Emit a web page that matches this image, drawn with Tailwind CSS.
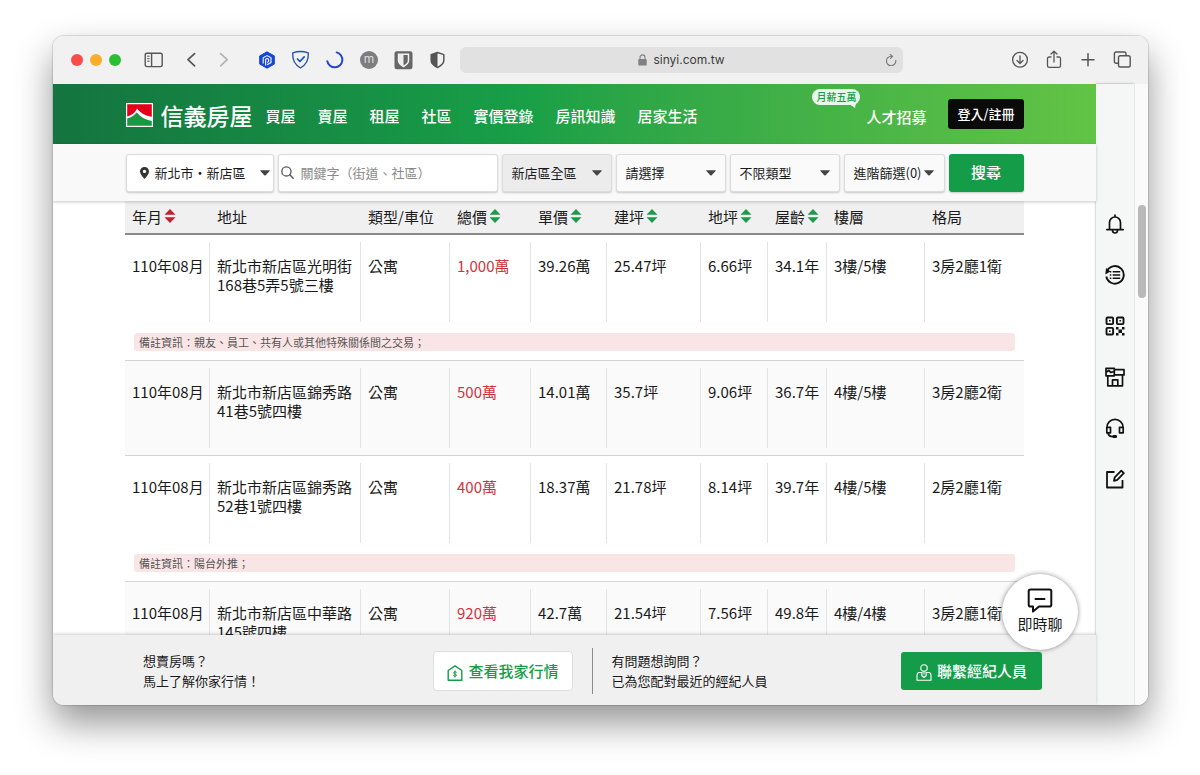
<!DOCTYPE html>
<html lang="zh-Hant">
<head>
<meta charset="utf-8">
<meta name="viewport" content="width=device-width, initial-scale=1">
<title>信義房屋</title>
<script src="https://cdn.jsdelivr.net/npm/@tailwindcss/browser@4"></script>
</head>
<body class="flex h-screen overflow-hidden bg-white pt-9 pr-[52px] pb-[70px] pl-[53px] font-['Noto_Sans_CJK_TC','Noto_Sans_CJK_SC',sans-serif] text-[15px] text-[#1a1a1a]">

<svg class="hidden" aria-hidden="true">
  <symbol id="sort" viewBox="0 0 12 14"><path d="M6 0 11.5 5.7H.5zM6 14 .5 8.3h11z" fill="currentColor"/></symbol>
  <symbol id="caret" viewBox="0 0 10 6"><path d="M.8.2h8.4q1 0 .4.8L5.7 5.3q-.7.6-1.4 0L.4 1Q-.2.2.8.2z" fill="currentColor"/></symbol>
</svg>

<div class="flex min-w-0 flex-1 flex-col overflow-hidden rounded-[11px] bg-white shadow-[0_0_1px_1px_rgba(0,0,0,0.13),0_18px_36px_rgba(0,0,0,0.42)]">

  <!-- Browser toolbar -->
  <div class="flex h-12 shrink-0 items-center bg-[#f1f1f2] pr-4 pl-[18px] text-[#555]">
    <div class="flex gap-[7px]">
      <span class="size-3 rounded-full bg-[#f84c4b]"></span>
      <span class="size-3 rounded-full bg-[#f8ae2b]"></span>
      <span class="size-3 rounded-full bg-[#2bbf35]"></span>
    </div>
    <button aria-label="側邊欄" class="ml-[23px]"><svg class="size-5" viewBox="0 0 20 20" fill="none" stroke="currentColor" stroke-width="1.4"><rect x="1.2" y="3.2" width="17" height="13.4" rx="1.8"/><path d="M7.6 3.2v13.4"/><path d="M3.2 6.2h2.4M3.2 8.7h2.4M3.2 11.2h2.4" stroke-width="1"/></svg></button>
    <button aria-label="上一頁" class="ml-[17px]"><svg class="size-5" viewBox="0 0 20 20" fill="none" stroke="currentColor" stroke-width="1.7" stroke-linecap="round" stroke-linejoin="round"><path d="M13.6 3.6 7 9.7l6.6 6.1"/></svg></button>
    <button aria-label="下一頁" class="ml-[13px] text-[#b0b0b0]"><svg class="size-5" viewBox="0 0 20 20" fill="none" stroke="currentColor" stroke-width="1.6" stroke-linecap="round" stroke-linejoin="round"><path d="m6.6 3.6 6.6 6.1-6.6 6.1"/></svg></button>
    <div class="ml-[23px] flex gap-[14px]">
      <button aria-label="擴充功能 1"><svg class="size-5" viewBox="0 0 20 20"><path d="M10 1.8 17.3 5.9v8.2L10 18.2 2.7 14.1V5.9z" fill="#1746d1" stroke="#1746d1" stroke-width="1" stroke-linejoin="round"/><path d="M8.6 15.4V9.300l1.500-.9 1.500.9v2.200l-1.500.9M6.200 13.400V7.800L10.100 5.600l3.900 2.200v4.800l-3.900 2.200" fill="none" stroke="#e8edfc" stroke-width="1.200"/></svg></button>
      <button aria-label="擴充功能 2"><svg class="size-5" viewBox="0 0 20 20" fill="none" stroke="#2551b5" stroke-width="1.4" stroke-linejoin="round" stroke-linecap="round"><path d="M9.500 1.500c2.300 0 5 .5 7.800 1.400.4 7-2.100 11.900-7.800 15.100C3.800 14.800 1.300 9.900 1.700 2.900c2.800-.9 5.500-1.400 7.800-1.400z"/><path d="m6.500 9 2.400 2.500 4.300-4.600" stroke-width="1.700"/></svg></button>
      <button aria-label="擴充功能 3"><svg class="size-5" viewBox="0 0 20 20" fill="none" stroke="#2446ce" stroke-width="2" stroke-linecap="round"><path d="M11.700 2.400a7.600 7.600 0 1 1-9.400 8.800"/></svg></button>
      <button aria-label="擴充功能 4" class="flex size-5 items-center justify-center"><span class="flex size-[18px] items-center justify-center rounded-full bg-[#7d7d7d] pb-0.5 font-['Inter',sans-serif] text-[12px] text-[#ddd]">m</span></button>
      <button aria-label="擴充功能 5"><svg class="size-5" viewBox="0 0 20 20"><rect x="1.500" y="1.200" width="18" height="18" rx="2.200" fill="#666"/><path d="M5.500 4.300h10v6.200c0 2.700-2.300 4.500-5 6-2.700-1.500-5-3.300-5-6z" fill="#666" stroke="#f4f4f4" stroke-width="1.500"/><path d="M10.500 4.300h-5v6.200c0 2.700 2.300 4.500 5 6z" fill="#eee"/></svg></button>
      <button aria-label="擴充功能 6"><svg class="size-5" viewBox="0 0 20 20"><path d="M10.500 2.500 16.800 4.600v6c0 3-3 5.300-6.300 7-3.300-1.700-6.300-4-6.300-7v-6z" fill="none" stroke="#555" stroke-width="1.500" stroke-linejoin="round"/><path d="M10.500 2.500v15.100c-3.300-1.700-6.300-4-6.300-7v-6z" fill="#555"/></svg></button>
    </div>
    <div class="relative mr-[107px] ml-[13px] flex h-[26px] min-w-0 flex-1 items-center justify-center gap-[6px] rounded-md bg-[#e1e1e1] font-['Inter',sans-serif] text-[12px] text-[#3c3c3c]">
      <svg class="h-3 w-[9px]" viewBox="0 0 9 12"><rect x=".3" y="5" width="8.400" height="6.600" rx="1.200" fill="#808080"/><path d="M2 5.500V3.400a2.500 2.500 0 0 1 5 0v2.100" fill="none" stroke="#808080" stroke-width="1.100"/></svg>
      <span>sinyi.com.tw</span>
      <button aria-label="重新載入" class="absolute right-1.5 text-[#777]"><svg class="size-3" viewBox="0 0 12 12" fill="none" stroke="currentColor" stroke-width="1.100" stroke-linecap="round"><path d="M10.800 6.400A4.700 4.700 0 1 1 6.300 2.300M5.200.5l2.300 1.800-2 2"/></svg></button>
    </div>
    <div class="flex gap-[14px]">
      <button aria-label="下載"><svg class="size-5" viewBox="0 0 20 20" fill="none" stroke="currentColor" stroke-width="1.300" stroke-linecap="round" stroke-linejoin="round"><circle cx="10" cy="9.800" r="7.400"/><path d="M10 5.800v7.400M7 10.500l3 3 3-3"/></svg></button>
      <button aria-label="分享"><svg class="size-5" viewBox="0 0 20 20" fill="none" stroke="currentColor" stroke-width="1.300" stroke-linecap="round" stroke-linejoin="round"><path d="M7 7H5.200C4 7 3.500 7.500 3.500 8.600v7.100c0 1.100.5 1.600 1.700 1.600h9.600c1.200 0 1.700-.5 1.700-1.600V8.600c0-1.100-.5-1.600-1.700-1.600H13M10 12V1.300M7 4l3-2.800L13 4"/></svg></button>
      <button aria-label="新增分頁"><svg class="size-5" viewBox="0 0 20 20" fill="none" stroke="currentColor" stroke-width="1.500" stroke-linecap="round"><path d="M4 9.700h12M10 3.700v12"/></svg></button>
      <button aria-label="分頁總覽"><svg class="size-5" viewBox="0 0 20 20" fill="none" stroke="currentColor" stroke-width="1.400" stroke-linejoin="round"><rect x="6.500" y="5.700" width="11.700" height="11.300" rx="1.800"/><path d="M6.500 13.300H4.200c-1.200 0-1.800-.6-1.800-1.800V3.800C2.400 2.600 3 2 4.200 2h8c1.200 0 1.800.6 1.800 1.800v1.900"/></svg></button>
    </div>
  </div>

  <div class="flex min-h-0 flex-1">
    <div class="relative flex min-w-0 flex-1 flex-col">

      <!-- Site header -->
      <header class="h-[60px] shrink-0 bg-linear-to-r from-[#14743f] via-[#189f47] via-45% to-[#62c445] text-white">
        <div class="mx-auto flex h-full max-w-[898px] items-center">
          <a href="#" class="flex items-center gap-2 pt-0.5 text-[23px] leading-8 font-medium">
            <svg class="h-6 w-[27px]" viewBox="0 0 27 24"><path d="M0 0h27v24H0z" fill="#fff"/><path d="M1.200 1.200h24.600v12.500C18 12.500 13.500 9 11 5.500 9.300 9.200 6 12.500 1.200 13.500z" fill="#e3001b"/><path d="M1.200 15.500C5.500 14.500 8.700 12 10.700 9.500c3.500 4.500 8.500 7.200 15.100 8.500v4.800H1.200z" fill="#1a9745"/></svg>
            <span>信義房屋</span>
          </a>
          <nav class="ml-[13px] flex gap-[22px] pt-1 leading-5 font-medium whitespace-nowrap">
            <a href="#">買屋</a><a href="#">賣屋</a><a href="#">租屋</a><a href="#">社區</a><a href="#">實價登錄</a><a href="#">房訊知識</a><a href="#">居家生活</a>
          </nav>
          <a href="#" class="relative ml-auto pt-1.5 leading-5 font-medium whitespace-nowrap">人才招募
            <span class="absolute -top-3 right-[66px] flex h-4 items-center rounded-full bg-[#e9f7ea] px-1 text-[10px] text-[#189f47]">月薪五萬<svg class="absolute right-1 -bottom-[3px] h-1.5 w-2" viewBox="0 0 8 6"><path d="M0 1h8l-1 5z" fill="#e9f7ea"/></svg></span>
          </a>
          <button class="ml-[22px] h-[30px] rounded-[3px] bg-[#0a0a0a] px-[9px] text-[13px] font-medium whitespace-nowrap">登入/註冊</button>
        </div>
      </header>

      <!-- Search filters -->
      <form class="relative h-[57px] shrink-0 bg-[#f9f9f9] text-[13px] shadow-[0_1px_3px_rgba(0,0,0,0.22)]">
        <div class="mx-auto flex h-full max-w-[898px] items-center gap-1">
          <button type="button" class="flex h-[38px] w-[148px] items-center rounded-[3px] border border-[#dcdcdc] bg-white pr-[3px] pl-[13px] whitespace-nowrap shadow-[0_1px_2px_rgba(0,0,0,0.2)]">
            <svg class="h-3 w-[9px]" viewBox="0 0 9 12"><path d="M4.500 0A4.400 4.400 0 0 1 9 4.400C9 7 6.500 9.500 4.500 12 2.500 9.500 0 7 0 4.400A4.400 4.400 0 0 1 4.500 0zm0 2.700a1.700 1.700 0 1 0 0 3.400 1.700 1.700 0 0 0 0-3.400z" fill="#333" fill-rule="evenodd"/></svg>
            <span class="ml-1.5">新北市・新店區</span>
            <svg class="ml-auto h-1.5 w-2.5 text-[#444]"><use href="#caret"/></svg>
          </button>
          <label class="flex h-[38px] w-[220px] items-center gap-[7px] rounded-[3px] border border-[#dcdcdc] bg-white pl-0.5 shadow-[0_1px_2px_rgba(0,0,0,0.2)]">
            <svg class="size-[13px] shrink-0 text-[#555]" viewBox="0 0 13 13" fill="none" stroke="currentColor" stroke-width="1.300" stroke-linecap="round"><circle cx="5.400" cy="5.400" r="4.600"/><path d="m8.800 8.800 3.400 3.400"/></svg>
            <input type="text" aria-label="關鍵字" placeholder="關鍵字（街道、社區）" class="w-full min-w-0 outline-none placeholder:text-[#8a8a8a]">
          </label>
          <div class="relative flex h-[38px] w-[110px] items-center">
            <select aria-label="區域" class="size-full appearance-none rounded-[3px] border border-[#dcdcdc] bg-[#ececec] pl-[9px] shadow-[0_1px_2px_rgba(0,0,0,0.2)]"><option>新店區全區</option></select>
            <svg class="pointer-events-none absolute right-2.5 h-1.5 w-2.5 text-[#444]"><use href="#caret"/></svg>
          </div>
          <div class="relative flex h-[38px] w-[110px] items-center">
            <select aria-label="期間" class="size-full appearance-none rounded-[3px] border border-[#dcdcdc] bg-[#fafafa] pl-[9px] shadow-[0_1px_2px_rgba(0,0,0,0.2)]"><option>請選擇</option></select>
            <svg class="pointer-events-none absolute right-2.5 h-1.5 w-2.5 text-[#444]"><use href="#caret"/></svg>
          </div>
          <div class="relative flex h-[38px] w-[110px] items-center">
            <select aria-label="類型" class="size-full appearance-none rounded-[3px] border border-[#dcdcdc] bg-[#fafafa] pl-[9px] shadow-[0_1px_2px_rgba(0,0,0,0.2)]"><option>不限類型</option></select>
            <svg class="pointer-events-none absolute right-2.5 h-1.5 w-2.5 text-[#444]"><use href="#caret"/></svg>
          </div>
          <button type="button" class="flex h-[38px] w-[101px] items-center gap-0.5 rounded-[3px] border border-[#dcdcdc] bg-[#fafafa] pl-[9px] whitespace-nowrap shadow-[0_1px_2px_rgba(0,0,0,0.2)]">進階篩選(0)<svg class="h-1.5 w-2.5 text-[#444]"><use href="#caret"/></svg></button>
          <button type="submit" class="h-[38px] flex-1 rounded-[3px] bg-[#159c49] text-[15px] font-medium text-white shadow-[0_1px_2px_rgba(0,0,0,0.2)]">搜尋</button>
        </div>
      </form>

      <!-- Transactions -->
      <main class="min-h-0 flex-1 overflow-hidden">
        <table class="mx-auto w-full max-w-[899px] table-fixed border-collapse text-left leading-[19px]">
          <colgroup><col class="w-[85px]"><col class="w-[151px]"><col class="w-[89px]"><col class="w-[81px]"><col class="w-[76px]"><col class="w-[94px]"><col class="w-[67px]"><col class="w-[59px]"><col class="w-[98px]"><col></colgroup>
          <thead class="bg-[#f0f0f0] whitespace-nowrap">
            <tr class="h-[33px] border-b-2 border-[#8a8a8a] *:pb-0.5 *:pl-[7px] *:font-normal">
              <th scope="col"><button class="flex items-center gap-0.5">年月<svg class="h-[14px] w-3 text-[#c5202e]"><use href="#sort"/></svg></button></th>
              <th scope="col">地址</th>
              <th scope="col">類型/車位</th>
              <th scope="col"><button class="flex items-center gap-0.5">總價<svg class="h-[14px] w-3 text-[#1f9a4c]"><use href="#sort"/></svg></button></th>
              <th scope="col"><button class="flex items-center gap-0.5">單價<svg class="h-[14px] w-3 text-[#1f9a4c]"><use href="#sort"/></svg></button></th>
              <th scope="col"><button class="flex items-center gap-0.5">建坪<svg class="h-[14px] w-3 text-[#1f9a4c]"><use href="#sort"/></svg></button></th>
              <th scope="col"><button class="flex items-center gap-0.5">地坪<svg class="h-[14px] w-3 text-[#1f9a4c]"><use href="#sort"/></svg></button></th>
              <th scope="col"><button class="flex items-center gap-0.5">屋齡<svg class="h-[14px] w-3 text-[#1f9a4c]"><use href="#sort"/></svg></button></th>
              <th scope="col">樓層</th>
              <th scope="col">格局</th>
            </tr>
          </thead>
          <tbody id="rows"></tbody>
        </table>
      </main>

      <!-- Call-to-action bar -->
      <footer class="relative grid h-[70px] shrink-0 grid-cols-2 items-center bg-[#f0f0f0] pt-0.5 pr-[54px] pl-[90px] text-[13px] leading-5 whitespace-nowrap shadow-[0_-1px_3px_rgba(0,0,0,0.2)]">
        <div class="flex h-[46px] items-center justify-between border-r border-[#8c8c8c] pr-[19px]">
          <p>想賣房嗎？<br>馬上了解你家行情！</p>
          <button class="flex h-10 items-center gap-[5px] rounded border border-[#dedede] bg-white px-[13px] text-[15px] font-medium text-[#159c49]">
            <svg class="mt-1 h-4 w-4" viewBox="0 0 16 16" fill="none" stroke="currentColor" stroke-width="1.400" stroke-linejoin="round" stroke-linecap="round"><path d="M1.200 5.500 8 .9l6.800 4.600v9.700H1.200z"/><path d="M9.500 7.200C9 6.500 6.600 6.400 6.600 7.900c0 1.300 2.900.8 2.900 2.200 0 1.500-2.500 1.400-3 .5M8 5.800v6.200" stroke-width="1"/></svg>
            查看我家行情
          </button>
        </div>
        <div class="flex items-center justify-between pl-[19px]">
          <p>有問題想詢問？<br>已為您配對最近的經紀人員</p>
          <button class="flex h-[38px] items-center gap-[5px] rounded-[3px] bg-[#159c49] px-[15px] text-[15px] font-medium text-white">
            <svg class="mt-0.5 h-[17px] w-4" viewBox="0 0 16 17" fill="none" stroke="currentColor" stroke-width="1.100" stroke-linejoin="round"><circle cx="8" cy="4" r="3.200"/><path d="M5.300 8.500H3.700C2 8.500 1 9.600 1 11.300v4.900h14v-4.900c0-1.700-1-2.800-2.700-2.800h-1.600M6 8l-.3 3.500L8 13.500l2.300-2L10 8M8 7.200v3.300"/></svg>
            聯繫經紀人員
          </button>
        </div>
      </footer>

      <button class="absolute right-[18px] bottom-[55px] flex size-[76px] flex-col items-center rounded-full bg-white pt-3.5 leading-5 shadow-[0_0_5px_rgba(0,0,0,0.45)]">
        <svg class="h-[26px] w-[26px]" viewBox="0 0 26 26" fill="none" stroke="#111" stroke-width="2" stroke-linejoin="round" stroke-linecap="round"><path d="M3.500 1.500h19q1.800 0 1.800 1.800v13.500q0 1.800-1.800 1.800H12l-6 5v-5H3.500q-1.800 0-1.800-1.800V3.300q0-1.800 1.800-1.800zM8.500 11h9"/></svg>
        即時聊
      </button>
    </div>

    <!-- Tool rail -->
    <aside class="flex w-[38px] shrink-0 flex-col items-center gap-[31px] bg-[#f5f7f6] pt-[130px] text-[#111] shadow-[0_0_2px_rgba(0,0,0,0.4)]">
      <button aria-label="通知"><svg class="size-5" viewBox="0 0 20 20" fill="none" stroke="currentColor" stroke-width="1.700" stroke-linejoin="round" stroke-linecap="round"><path d="M4.500 15.500V8.500a5.500 5.500 0 0 1 11 0v7M1.800 15.600h16.400M10 1v1.700M7.500 16.500c.2 3.300 4.800 3.300 5 0"/></svg></button>
      <button aria-label="瀏覽紀錄"><svg class="size-5" viewBox="0 0 20 20" fill="none" stroke="currentColor" stroke-width="1.900"><path d="M2.400 5.300A8.800 8.800 0 1 1 1.300 11.500"/><path d="M.3 9.500 1 3l4.500 3.600z" fill="currentColor" stroke="none"/><path d="M7.700 6.800h7.500M7.700 10h7.500M7.700 13.200h7.500M4.800 6.800h1.500M4.800 10h1.500M4.800 13.200h1.500" stroke-width="1.500"/></svg></button>
      <button aria-label="QR Code"><svg class="size-5" viewBox="0 0 20 20" fill="none" stroke="currentColor" stroke-width="1.900"><rect x="1.500" y="1.500" width="6.600" height="6.600" rx="1"/><rect x="11.900" y="1.500" width="6.600" height="6.600" rx="1"/><rect x="1.500" y="11.900" width="6.600" height="6.600" rx="1"/><path d="M4 4h1.600v1.600H4zM14.400 4H16v1.600h-1.600zM4 14.400h1.600V16H4zM11 11h2.500v2.500H11zM17 11h2.500v2.500H17zM13.500 13.500H17V17h-3.500zM11 17h2.500v2.500H11zM17 17h2.500v2.500H17z" fill="currentColor" stroke="none"/></svg></button>
      <button aria-label="門市"><svg class="size-5" viewBox="0 0 20 20" fill="none" stroke="currentColor" stroke-width="1.700" stroke-linejoin="round"><path d="M1 1.300h8.300v7.500H1zM9.300 2.700H19v5.200H9.300M2.800 8.800v10h14.700V7.900M7.500 18.800v-6h5.300v6M1.500 5l2.200-1.500L6 5.500l2.800-1"/></svg></button>
      <button aria-label="客服"><svg class="size-5" viewBox="0 0 20 20" fill="none" stroke="currentColor" stroke-width="1.700" stroke-linejoin="round"><path d="M1.800 9.300h3.700v5.500H1.800zM14.500 9.300h3.700v5.500h-3.700zM2 9.300a8 8 0 0 1 16 0M3 14.800c.3 2.500 2.300 3.800 5 3.800"/><rect x="7.500" y="17" width="4.500" height="3" rx="1.200" fill="currentColor" stroke="none"/></svg></button>
      <button aria-label="意見回饋"><svg class="size-5" viewBox="0 0 20 20" fill="none" stroke="currentColor" stroke-width="1.800" stroke-linejoin="round"><path d="M9.500 3H2v15.500h15.500V11M9 11.800l.7-3.500L16.300 1.700l2.500 2.500-6.500 6.700z"/></svg></button>
    </aside>
    <div class="flex w-[14px] shrink-0 justify-center border-l border-[#e6e8e7] bg-[#fafafa] pt-[121px]">
      <span class="h-[93px] w-2 rounded-full bg-[#b9b9b9]"></span>
    </div>
  </div>
</div>

<script>
const deals = [
  { cells: ['110年08月', '新北市新店區光明街168巷5弄5號三樓', '公寓', '1,000萬', '39.26萬', '25.47坪', '6.66坪', '34.1年', '3樓/5樓', '3房2廳1衛'], note: '備註資訊：親友、員工、共有人或其他特殊關係間之交易；' },
  { cells: ['110年08月', '新北市新店區錦秀路41巷5號四樓', '公寓', '500萬', '14.01萬', '35.7坪', '9.06坪', '36.7年', '4樓/5樓', '3房2廳2衛'] },
  { cells: ['110年08月', '新北市新店區錦秀路52巷1號四樓', '公寓', '400萬', '18.37萬', '21.78坪', '8.14坪', '39.7年', '4樓/5樓', '2房2廳1衛'], note: '備註資訊：陽台外推；' },
  { cells: ['110年08月', '新北市新店區中華路145號四樓', '公寓', '920萬', '42.7萬', '21.54坪', '7.56坪', '49.8年', '4樓/4樓', '3房2廳1衛'] },
];
const stripes = ['bg-white', 'bg-[#fafafa]'];
document.getElementById('rows').innerHTML = deals.map((deal, i) => {
  const last = deal.cells.length - 1;
  const cells = deal.cells.map((text, c) =>
    `<td class="py-[7px]"><div class="h-20 pt-3.5 pl-[7px] ${c < last ? 'border-r border-[#e4e4e4]' : ''} ${c === 3 ? 'text-[#d3333d]' : ''}">${text}</div></td>`).join('');
  const line = 'border-b border-[#d5d5d5]';
  return `<tr class="${stripes[i % 2]} ${deal.note ? '' : line}">${cells}</tr>` +
    (deal.note ? `<tr class="${stripes[i % 2]} ${line}"><td colspan="10" class="px-[9px] pt-1 pb-[9px]"><p class="h-[18px] rounded-[3px] bg-[#f9e5e6] pl-[5px] text-[11px] leading-[18px] text-[#555]">${deal.note}</p></td></tr>` : '');
}).join('');
</script>
</body>
</html>
